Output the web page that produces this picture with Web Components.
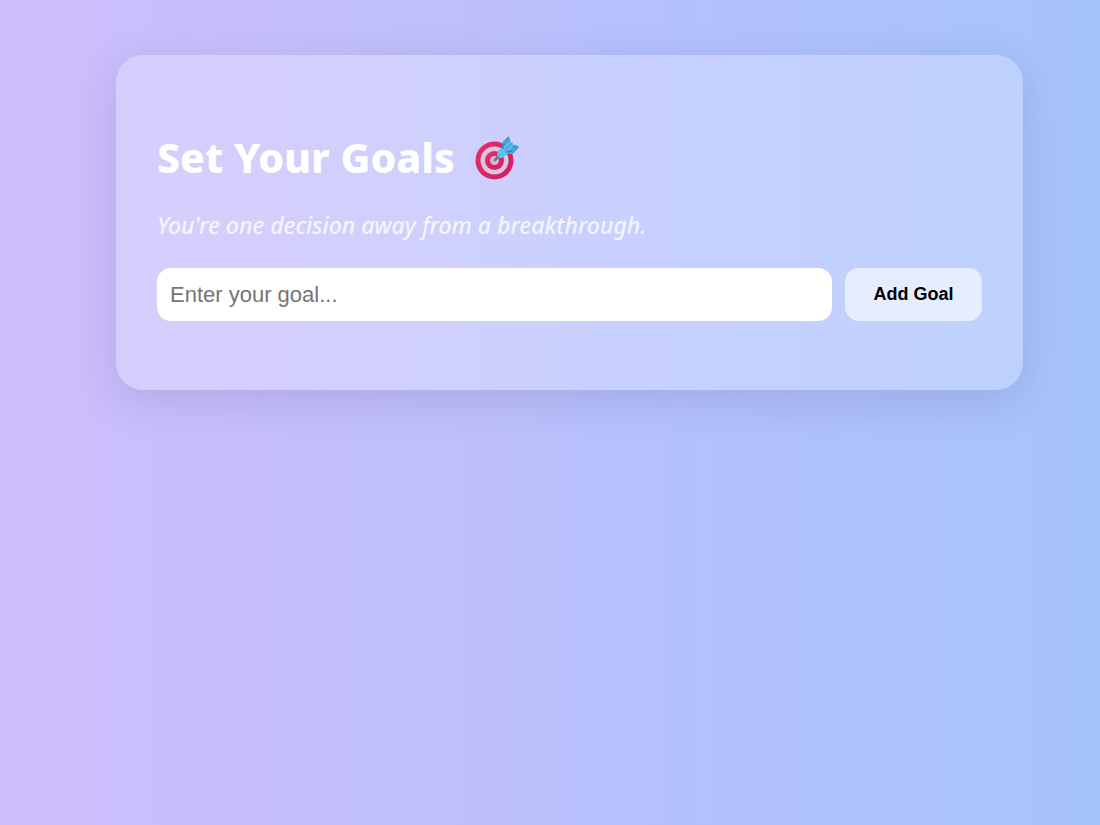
<!DOCTYPE html>
<html lang="en">
<head>
<meta charset="utf-8">
<meta name="viewport" content="width=device-width, initial-scale=1">
<title>Set Your Goals</title>
<style>
  body {
    margin: 0;
    min-height: 100vh;
    font-family: "Noto Sans", "Open Sans", sans-serif;
    background: linear-gradient(to right, #cfbdfb 0%, #bbc0fc 49%, #b6c0ff 55%, #a6c3fb 100%);
  }
</style>
</head>
<body>
<goal-page>
  <goal-card>
    <goal-heading slot="heading">Set Your Goals</goal-heading>
    <goal-tagline slot="tagline">You're one decision away from a breakthrough.</goal-tagline>
    <goal-form placeholder="Enter your goal...">Add Goal</goal-form>
  </goal-card>
</goal-page>

<script>
  const define = (name, html, setup) => {
    const template = document.createElement("template");
    template.innerHTML = html;
    customElements.define(name, class extends HTMLElement {
      constructor() {
        super();
        this.attachShadow({ mode: "open" }).append(template.content.cloneNode(true));
      }
      connectedCallback() {
        if (setup) setup(this, this.shadowRoot);
      }
    });
  };

  define("goal-page", `
    <style>
      :host { display: block; box-sizing: border-box; padding: 55px 77px 55px 116px; }
    </style>
    <slot></slot>`);

  define("goal-card", `
    <style>
      :host {
        display: block;
        padding: 69px 41px;
        border-radius: 27px;
        background: rgba(255, 255, 255, 0.25);
        box-shadow: 0 11px 41px rgba(60, 50, 100, 0.15);
      }
      section { display: flex; flex-direction: column; }
    </style>
    <section>
      <slot name="heading"></slot>
      <slot name="tagline"></slot>
      <slot></slot>
    </section>`);

  define("goal-heading", `
    <style>
      :host { display: block; color: #fff; }
      h1 {
        display: flex;
        align-items: center;
        gap: 20px;
        margin: 0;
        font-size: 41px;
        line-height: 66px;
        font-weight: 800;
      }
    </style>
    <h1><slot></slot><goal-target></goal-target></h1>`);

  define("goal-target", `
    <style>
      :host { display: block; flex: none; width: 45px; height: 45px; }
      svg { display: block; width: 100%; height: 100%; }
    </style>
    <svg viewBox="0 0 45 45" aria-hidden="true">
      <defs>
        <linearGradient id="ring" x1="0" y1="0" x2="1" y2="1">
          <stop offset="0" stop-color="#e52f68"/>
          <stop offset="1" stop-color="#c91f69"/>
        </linearGradient>
        <linearGradient id="dart" x1="0" y1="1" x2="1" y2="0">
          <stop offset="0" stop-color="#50b4e6"/>
          <stop offset="1" stop-color="#348fdc"/>
        </linearGradient>
      </defs>
      <circle cx="19.5" cy="25.5" r="19" fill="url(#ring)"/>
      <circle cx="19.5" cy="25.5" r="14" fill="#dfc4df"/>
      <circle cx="19.5" cy="25.5" r="9.5" fill="url(#ring)"/>
      <circle cx="19.5" cy="25.5" r="4.5" fill="#d8b6d2"/>
      <path d="M20 25 25 20" stroke="#766c8c" stroke-width="2.5" stroke-linecap="round"/>
      <path d="M27 15 27.500 7 33 1.500Q34 1 34.500 3L36 9 42 10.500Q45 11.500 43 13.500L38 19 30 19Z" fill="url(#dart)"/>
      <path d="M22 19Q22 16 25 14L34 7 38 11 31 20Q28 24 24.500 23Q22 22 22 19Z" fill="#5bc2e8"/>
      <path d="M30 15 37 8" stroke="#3f9fdd" stroke-width="1.5" stroke-linecap="round"/>
      <path d="M28 13 29 9M32 17 36 16" stroke="#2f80ce" stroke-width="1.5" stroke-linecap="round"/>
    </svg>`);

  define("goal-tagline", `
    <style>
      :host { display: block; color: rgba(255, 255, 255, 0.8); }
      p { margin: 17px 0 0; font-size: 23px; line-height: 36px; font-weight: 500; font-style: italic; }
    </style>
    <p><slot></slot></p>`);

  define("goal-form", `
    <style>
      :host { display: block; }
      form { display: flex; gap: 13px; margin: 25px 0 0; }
      input, button {
        box-sizing: border-box;
        height: 53px;
        margin: 0;
        border: 0;
        border-radius: 14px;
        font-family: "Liberation Sans", Arial, sans-serif;
      }
      input {
        flex: 1;
        min-width: 0;
        padding: 0 13px;
        background: #fff;
        color: #222;
        font-size: 22px;
      }
      input::placeholder { color: #757575; opacity: 1; }
      button {
        flex: none;
        padding: 0 28px;
        min-width: 137px;
        background: rgba(255, 255, 255, 0.6);
        color: #000;
        font-size: 18px;
        font-weight: 700;
        cursor: pointer;
      }
    </style>
    <form>
      <input type="text" aria-label="Goal">
      <button type="submit"><slot></slot></button>
    </form>`, (host, root) => {
      root.querySelector("input").placeholder = host.getAttribute("placeholder");
      root.querySelector("form").addEventListener("submit", e => e.preventDefault());
    });
</script>
</body>
</html>
